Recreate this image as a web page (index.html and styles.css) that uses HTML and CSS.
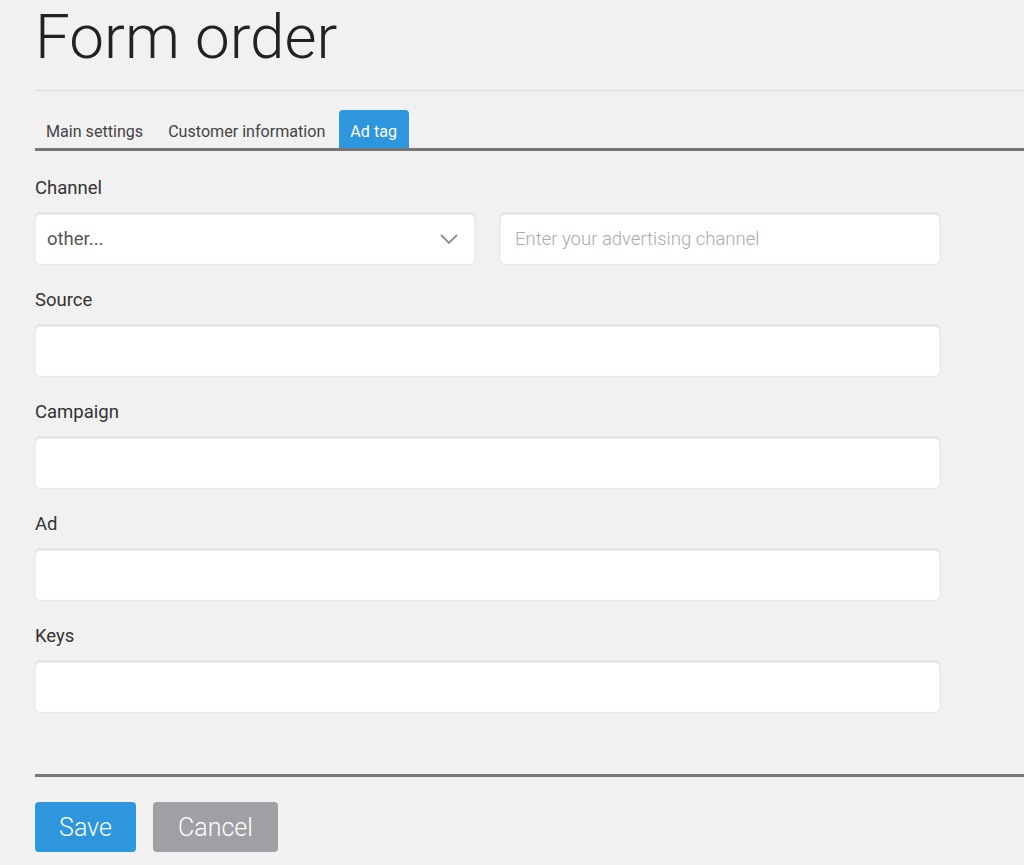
FILE: index.html
```html
<!DOCTYPE html>
<html>
<head>
<meta charset="utf-8">
<link rel="stylesheet" href="styles.css">
</head>
<body>
<div class="page">
  <h1 class="title">Form order</h1>
  <div class="tabs">
    <div class="tab">Main settings</div>
    <div class="tab">Customer information</div>
    <div class="tab active">Ad tag</div>
  </div>
  <form class="form">
    <div class="field">
      <label class="label">Channel</label>
      <div class="row">
        <div class="control select">
          <span class="value">other...</span>
          <svg class="chevron" width="20" height="12" viewBox="0 0 20 12"><path d="M2 2 L10 10 L18 2" fill="none" stroke="#8f8f8f" stroke-width="1.8"/></svg>
        </div>
        <div class="control"><span class="placeholder">Enter your advertising channel</span></div>
      </div>
    </div>
    <div class="field">
      <label class="label">Source</label>
      <div class="control wide"></div>
    </div>
    <div class="field">
      <label class="label">Campaign</label>
      <div class="control wide"></div>
    </div>
    <div class="field">
      <label class="label">Ad</label>
      <div class="control wide"></div>
    </div>
    <div class="field">
      <label class="label">Keys</label>
      <div class="control wide"></div>
    </div>
  </form>
  <div class="actions">
    <button class="btn save" type="button">Save</button>
    <button class="btn cancel" type="button">Cancel</button>
  </div>
</div>
</body>
</html>
```
FILE: styles.css
```css
html, body {
  margin: 0;
  padding: 0;
  background: #f1f1f1;
}
body {
  font-family: Roboto, "Liberation Sans", sans-serif;
  color: #333;
}
.page {
  padding-left: 35px;
}
.title {
  margin: 0;
  font-weight: 300;
  font-size: 62px;
  line-height: 73px;
  color: #222;
  box-sizing: border-box;
  border-bottom: 1px solid #d9d9d9;
  height: 91px;
}
.tabs {
  display: flex;
  margin-top: 19px;
  border-bottom: 3px solid #777;
  height: 38px;
  align-items: stretch;
}
.tab {
  font-size: 16.1px;
  color: #444;
  padding: 0 11px;
  display: flex;
  align-items: center;
  padding-top: 5px;
  box-sizing: border-box;
  margin-right: 3px;
  border-radius: 4px 4px 0 0;
}
.tab.active {
  background: #2d96dd;
  color: #fff;
  padding: 5px 12px 0 11px;
}
.form {
  width: 905px;
  padding-top: 26px;
}
.field {
  margin-bottom: 25px;
}
.label {
  display: block;
  font-size: 18.5px;
  color: #333;
  height: 22px;
  line-height: 22px;
  margin-bottom: 14px;
}
.row {
  display: grid;
  grid-template-columns: 440px 440px;
  column-gap: 25px;
}
.control {
  height: 51px;
  box-sizing: border-box;
  background: #fff;
  border-radius: 5px;
  box-shadow: inset 0 1px 2px rgba(0,0,0,0.18), 0 0 0 1px rgba(0,0,0,0.03);
  display: flex;
  align-items: center;
  padding: 0 15px;
  font-size: 18.5px;
}
.select {
  justify-content: space-between;
  padding-left: 12px;
  padding-right: 16px;
}
.value {
  color: #555;
}
.placeholder {
  color: #aaa;
  font-weight: 300;
}
.actions {
  margin-top: 62px;
  border-top: 3px solid #777;
  padding-top: 25px;
  display: flex;
  gap: 17px;
}
.btn {
  border: none;
  border-radius: 4px;
  height: 50px;
  color: #fff;
  font-family: Roboto, "Liberation Sans", sans-serif;
  font-size: 25px;
  font-weight: 300;
  padding: 0;
}
.save {
  background: #2d96dd;
  width: 101px;
}
.cancel {
  background: #9fa0a4;
  width: 125px;
}
```
